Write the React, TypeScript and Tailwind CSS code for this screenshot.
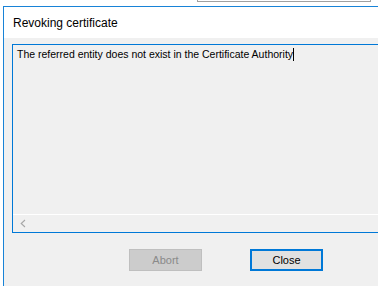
export default function App() {
  return (
    <div
      className="w-[378px] h-[286px] bg-white overflow-hidden flex flex-col"
      style={{ fontFamily: '"Liberation Sans", Arial, sans-serif' }}
    >
      {/* window behind, peeking at the top */}
      <div className="h-[6px] shrink-0">
        <div className="ml-[197px] w-[174px] h-[2px] border-l border-r border-b border-[#a0a0a0]" />
      </div>

      {/* dialog */}
      <div className="ml-[3px] flex-1 flex flex-col border-l border-t border-[#1883d7] bg-[#f0f0f0]">
        <div className="h-[31px] shrink-0 bg-white flex items-center pl-[9px] text-[12px] text-black">
          Revoking certificate
        </div>

        <div className="pt-[6px] pl-[8px]">
          <div className="h-[189px] border-t border-l border-b border-[#0078d7] bg-[#f0f0f0] flex flex-col">
            <div className="flex-1 pl-[4px] pt-[3px] text-[10.5px] leading-[13px] text-black flex items-start">
              <span>The referred entity does not exist in the Certificate Authority</span>
              <span className="inline-block w-[1px] h-[13px] bg-black" />
            </div>
            <div className="h-[1px] bg-white" />
            <div className="h-[17px] flex items-center pl-[7px]">
              <svg width="6" height="9" viewBox="0 0 6 9">
                <path d="M5 1 L1.2 4.5 L5 8" fill="none" stroke="#a6a6a6" strokeWidth="1.1" />
              </svg>
            </div>
          </div>
        </div>

        <div className="flex pt-[16px] pl-[125px] gap-[48px]">
          <div className="w-[73px] h-[22px] bg-[#cccccc] border border-[#bfbfbf] flex items-center justify-center text-[11px] text-[#8a8a8a]">
            Abort
          </div>
          <div className="w-[73px] h-[22px] bg-[#e1e1e1] border-2 border-[#0078d7] flex items-center justify-center text-[11px] text-black">
            Close
          </div>
        </div>
      </div>
    </div>
  );
}
